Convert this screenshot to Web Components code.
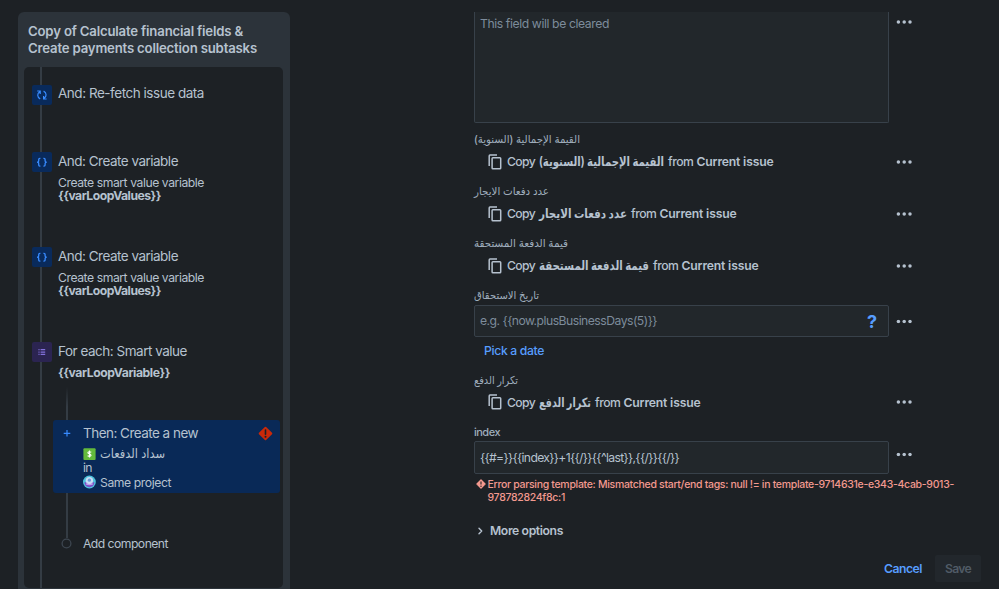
<!DOCTYPE html>
<html lang="en">
<head>
<meta charset="utf-8">
<title>Automation rule</title>
<style>
  :root {
    --surface: #1d2125;
    --raised: #2c333a;
    --input: #22272b;
    --line: #343c44;
    --text: #b6c2cf;
    --subtle: #9fadbc;
    --muted: #7d8c9b;
    --link: #579dff;
    --selected: #092957;
  }
  html, body { height: 100%; }
  body {
    margin: 0;
    overflow: hidden;
    background: var(--surface);
    color: var(--text);
    font-family: Inter, "DejaVu Sans", sans-serif;
    font-size: 12.2px;
  }
</style>
</head>
<body>
<rule-editor>
  <rule-chain slot="chain">
    <span slot="title"><fit-text width="215">Copy of Calculate financial fields &amp;</fit-text><br><fit-text width="229">Create payments collection subtasks</fit-text></span>
    <rule-step icon="refresh" style="height: 67.5px">
      <fit-text slot="title" width="146">And: Re-fetch issue data</fit-text>
    </rule-step>
    <rule-step icon="braces" style="height: 95px">
      <fit-text slot="title" width="120">And: Create variable</fit-text>
      <fit-text width="146">Create smart value variable</fit-text><br>
      <b><fit-text width="103">{{varLoopValues}}</fit-text></b>
    </rule-step>
    <rule-step icon="braces" style="height: 95px">
      <fit-text slot="title" width="120">And: Create variable</fit-text>
      <fit-text width="146">Create smart value variable</fit-text><br>
      <b><fit-text width="103">{{varLoopValues}}</fit-text></b>
    </rule-step>
    <rule-step icon="list" style="height: 45px">
      <fit-text slot="title" width="129">For each: Smart value</fit-text>
      <b><fit-text width="112">{{varLoopVariable}}</fit-text></b>
    </rule-step>
    <branch-steps slot="branch"></branch-steps>
  </rule-chain>

  <form-field top>
    <text-box tall><fit-text width="129">This field will be cleared</fit-text></text-box>
  </form-field>
  <form-field style="margin-top: 7.5px">
    <fit-text slot="label" width="106">القيمة الإجمالية (السنوية)</fit-text>
    <copy-value><b><fit-text width="125">القيمة الإجمالية (السنوية)</fit-text></b></copy-value>
  </form-field>
  <form-field>
    <fit-text slot="label" width="75">عدد دفعات الايجار</fit-text>
    <copy-value><b><fit-text width="88">عدد دفعات الايجار</fit-text></b></copy-value>
  </form-field>
  <form-field>
    <fit-text slot="label" width="94">قيمة الدفعة المستحقة</fit-text>
    <copy-value><b><fit-text width="110">قيمة الدفعة المستحقة</fit-text></b></copy-value>
  </form-field>
  <form-field shift="2.5" style="margin-bottom: 6px">
    <fit-text slot="label" width="65">تاريخ الاستحقاق</fit-text>
    <text-box help style="margin-top: 2.5px"><fit-text width="177">e.g. {{now.plusBusinessDays(5)}}</fit-text></text-box>
    <a slot="below" class="pick"><fit-text width="60">Pick a date</fit-text></a>
  </form-field>
  <form-field>
    <fit-text slot="label" width="44">تكرار الدفع</fit-text>
    <copy-value><b><fit-text width="52">تكرار الدفع</fit-text></b></copy-value>
  </form-field>
  <form-field shift="-1.5">
    <fit-text slot="label" width="26">index</fit-text>
    <text-box filled style="margin-top: 2px"><fit-text width="199">{{#=}}{{index}}+1{{/}}{{^last}},{{/}}{{/}}</fit-text></text-box>
    <error-note slot="below"></error-note>
  </form-field>
  <more-options></more-options>
  <form-actions></form-actions>
</rule-editor>

<script>
const ICONS = {
  refresh: `<svg width="20" height="20" viewBox="0 0 20 20" fill="none" stroke="#388bff" stroke-width="1.2">
    <path d="M5.200 6H8.200V9M7.900 6.400C4.900 8.400 5 12.300 8.200 13.900M14.600 14H11.600V11M11.900 13.600C14.900 11.600 14.800 7.700 11.600 6.100"/></svg>`,
  braces: `<svg width="20" height="20" viewBox="0 0 20 20" fill="none" stroke="#388bff" stroke-width="1.3">
    <path d="M8.4 6.3H7.8Q6.7 6.3 6.7 7.4V9Q6.7 10.2 5 10.2 6.7 10.2 6.7 11.4V13Q6.7 14.1 7.8 14.1H8.4M11.4 6.3H12Q13.1 6.3 13.1 7.4V9Q13.1 10.2 14.8 10.2 13.1 10.2 13.1 11.4V13Q13.1 14.1 12 14.1H11.4"/></svg>`,
  list: `<svg width="20" height="20" viewBox="0 0 20 20" fill="#8270db">
    <path opacity=".75" d="M6.3 7h1.4v1.3H6.3zM6.3 9.4h1.4v1.3H6.3zM6.3 11.8h1.4v1.3H6.3z"/>
    <path d="M8.6 7h4.6v1.3H8.6zM8.6 9.4h4.6v1.3H8.6zM8.6 11.8h4.6v1.3H8.6z"/></svg>`,
  copy: `<svg width="14" height="16" viewBox="0 0 14 16" fill="none" stroke="#b6c2cf" stroke-width="1.5">
    <path d="M1.2 12V1.9Q1.2 1.1 2 1.1H9"/><rect x="4.1" y="3.8" width="8.6" height="10.9" rx=".8"/></svg>`,
  dots: `<svg width="16" height="4" viewBox="0 0 16 4" fill="#b6c2cf">
    <circle cx="2.4" cy="2" r="1.75"/><circle cx="8.2" cy="2" r="1.75"/><circle cx="14" cy="2" r="1.75"/></svg>`,
};

/* Base: renders the static template of the element into its shadow root */
class BaseElement extends HTMLElement {
  constructor() {
    super();
    this.attachShadow({ mode: "open" });
  }
  connectedCallback() {
    this.shadowRoot.innerHTML = `<style>${this.styles()}</style>${this.html()}`;
  }
  styles() { return ":host { display: block; }"; }
  html() { return "<slot></slot>"; }
}

class RuleEditor extends BaseElement {
  styles() {
    return `
      :host { display: grid; grid-template-columns: 290px 525px; column-gap: 184px; height: 100vh; overflow: hidden; }
      aside { padding: 12px 0 0 18px; height: 577px; }
      main { display: flex; flex-direction: column; padding-top: 12px; height: 577px; }
    `;
  }
  html() {
    return `<aside><slot name="chain"></slot></aside><main><slot></slot></main>`;
  }
}

class RuleChain extends BaseElement {
  styles() {
    return `
      :host { display: flex; flex-direction: column; width: 272px; height: 586px; box-sizing: border-box;
        padding: 0 7px 10px 6px; background: var(--raised); border-radius: 6px 6px 0 0; }
      header { height: 55px; padding: 11px 0 0 4px; box-sizing: border-box;
        font-size: 13.2px; font-weight: 600; line-height: 16.8px; white-space: nowrap; }
      .track { height: 521px; box-sizing: border-box; padding: 17px 0 0 8px; border-radius: 5px;
        background: linear-gradient(var(--line), var(--line)) 16px 0 / 2px 100% no-repeat, var(--surface); }
    `;
  }
  html() {
    return `<header><slot name="title"></slot></header>
      <div class="track"><slot></slot><slot name="branch"></slot></div>`;
  }
}

class RuleStep extends BaseElement {
  styles() {
    const bg = this.getAttribute("icon") === "list" ? "#2b2451" : "#092a5b";
    return `
      :host { display: grid; grid-template-columns: 20px 1fr; column-gap: 6px; align-items: start; }
      .icon { width: 20px; height: 20px; margin-top: .5px; border-radius: 2px; background: ${bg}; }
      svg { display: block; }
      .title { font-size: 13.5px; line-height: 18px; height: 24px; }
      .body { line-height: 13.5px; white-space: nowrap; }
    `;
  }
  html() {
    return `<div class="icon">${ICONS[this.getAttribute("icon")]}</div>
      <div><div class="title"><slot name="title"></slot></div><div class="body"><slot></slot></div></div>`;
  }
}

class BranchSteps extends BaseElement {
  styles() {
    return `
      :host { display: block; padding-left: 21px; }
      .stem { width: 2px; margin-left: 13px; background: var(--line); }
      .stem.top { height: 33px; background: linear-gradient(transparent, var(--line) 60%); }
      .stem.bottom { height: 45px; }
      .card { display: grid; grid-template-columns: 30px 1fr 22px; width: 227px; height: 73.5px;
        background: var(--selected); border-radius: 3px; }
      .plus { margin: 9.500px 0 0 9.500px; }
      .title { padding-top: 4px; height: 23px; font-size: 13.5px; line-height: 18px; }
      .line { display: flex; align-items: center; gap: 4px; height: 14px; }
      .line.type { font-size: 12.8px; }
      .line.in { height: 14.6px; }
      .warn { margin-top: 6.5px; }
      .add { display: flex; align-items: center; gap: 11px; height: 10px; padding-left: 8px; }
      svg { display: block; flex: none; }
    `;
  }
  html() {
    return `
      <div class="stem top"></div>
      <div class="card">
        <svg class="plus" width="9" height="9" viewBox="0 0 9 9" stroke="#388bff" stroke-width="1.2"><path d="M4 1v6.6M.7 4.3h6.6"/></svg>
        <div>
          <div class="title"><fit-text width="115">Then: Create a new</fit-text></div>
          <div class="line type">
            <svg width="13" height="12" viewBox="0 0 13 12"><rect x=".4" y=".2" width="12.2" height="11.8" rx="1" fill="#63ba3c"/>
              <path d="M8.3 4.3Q6.5 3.4 5.4 3.9 4.3 4.8 5.6 5.6L7.4 6.3Q8.6 7.3 7.4 8.1 6.2 8.6 4.6 7.8M6.5 2.4v7.2" fill="none" stroke="#fff" stroke-width="1.1"/></svg>
            <fit-text width="65">سداد الدفعات</fit-text>
          </div>
          <div class="line in"><fit-text width="9">in</fit-text></div>
          <div class="line">
            <svg width="13" height="14" viewBox="0 0 13 14"><circle cx="6.4" cy="7" r="6.4" fill="#4fc3dc"/>
              <path d="M1.400 7.200h10q-.4 4.800-5 5Q1.800 12 1.400 7.200z" fill="#7b4fc4"/>
              <circle cx="6.4" cy="5.600" r="3.700" fill="#c9dcf6"/><path d="M3.300 8.200q3.100 1.400 6.200 0l.6 1.300q-3.700 1.300-7.400 0z" fill="#c3a0ee"/>
              <circle cx="6.400" cy="5.200" r="1.600" fill="#6f9fd6"/></svg>
            <fit-text width="71">Same project</fit-text>
          </div>
        </div>
        <svg class="warn" width="15" height="15" viewBox="0 0 15 15"><path d="M7.500 1.600 13.400 7.500 7.500 13.400 1.600 7.500z" fill="#c9290a" stroke="#c9290a" stroke-width="1.800" stroke-linejoin="round"/>
          <path d="M7.500 4v4.200" stroke="#1d2125" stroke-width="1.600" stroke-linecap="round"/><circle cx="7.500" cy="10.800" r="1" fill="#1d2125"/></svg>
      </div>
      <div class="stem bottom"></div>
      <div class="add">
        <svg width="11" height="11" viewBox="0 0 11 11"><circle cx="5.500" cy="5.500" r="4.400" fill="none" stroke="#3d4650" stroke-width="1.300"/></svg>
        <fit-text width="85">Add component</fit-text>
      </div>
    `;
  }
}

class FormField extends BaseElement {
  styles() {
    const shift = this.getAttribute("shift") || 0;
    return `
      :host { display: block; margin-bottom: 5px; }
      .label { height: 15px; padding-top: 1px; line-height: 16px; font-size: 11px; font-weight: 500; color: var(--subtle); white-space: nowrap; }
      .row { display: grid; grid-template-columns: 415px 16px; column-gap: 7px; align-items: center; }
      .menu { transform: translateY(${shift}px); }
      :host([top]) { margin-bottom: 0; }
      :host([top]) .label { display: none; }
      :host([top]) .menu { align-self: start; padding-top: 8px; }
      ::slotted(.pick) { display: block; height: 28px; line-height: 28px; padding-left: 10px;
        font-weight: 500; color: var(--link); }
      svg { display: block; }
    `;
  }
  html() {
    return `<div class="label"><slot name="label"></slot></div>
      <div class="row"><div><slot></slot></div><div class="menu">${ICONS.dots}</div></div>
      <slot name="below"></slot>`;
  }
}

class TextBox extends BaseElement {
  styles() {
    return `
      :host { display: flex; align-items: center; justify-content: space-between; box-sizing: border-box;
        height: 32px; padding: 0 11px 0 5px; background: var(--input); border: 1.500px solid #38414a;
        border-radius: 2px; color: var(--muted); }
      :host([filled]) { height: 33px; color: var(--text); }
      :host([tall]) { height: 110.500px; align-items: flex-start; padding-top: 4px; line-height: 16px;
        border-top: 0; border-radius: 0 0 2px 2px; }
      .help { padding-top: 2px; font-size: 18px; font-weight: 700; color: var(--link); }
    `;
  }
  html() {
    return `<slot></slot>${this.hasAttribute("help") ? `<span class="help">?</span>` : ""}`;
  }
}

/* "Copy <field> from Current issue" */
class CopyValue extends BaseElement {
  styles() {
    return `
      :host { display: flex; align-items: center; height: 31px; padding-left: 14px; font-weight: 500; white-space: nowrap; }
      svg { margin-right: 5px; }
      .from { margin: 0 3px 0 4px; }
      .copy { margin-right: 4px; }
      b { font-weight: 600; }
      ::slotted(b) { font-size: 12.8px; }
    `;
  }
  html() {
    return `${ICONS.copy}<fit-text class="copy" width="28">Copy</fit-text><slot></slot>
      <fit-text class="from" width="25.500">from</fit-text><b><fit-text width="77">Current issue</fit-text></b>`;
  }
}

class ErrorNote extends BaseElement {
  styles() {
    return `
      :host { display: grid; grid-template-columns: 11px 1fr; column-gap: .5px; padding: 4px 0 0 2px;
        font-size: 10.500px; line-height: 13.500px; font-weight: 500; color: #f3998f; white-space: nowrap; }
      svg { display: block; margin-top: 1.500px; }
    `;
  }
  html() {
    return `<svg width="10" height="10" viewBox="0 0 10 10"><path d="M5 1 9 5 5 9 1 5z" fill="#f3998f" stroke="#f3998f" stroke-width="1.400" stroke-linejoin="round"/>
      <path d="M5 2.600v3" stroke="#1d2125" stroke-width="1.100"/><circle cx="5" cy="7.200" r=".7" fill="#1d2125"/></svg>
      <div><fit-text width="466.500">Error parsing template: Mismatched start/end tags: null != in template-9714631e-e343-4cab-9013-</fit-text><br>
      <fit-text width="77.500">978782824f8c:1</fit-text></div>`;
  }
}

class MoreOptions extends BaseElement {
  styles() {
    return `
      :host { display: flex; align-items: center; gap: 6px; height: 16px; margin-top: 13px; padding-left: 3px; font-weight: 600; }
    `;
  }
  html() {
    return `<svg width="7" height="8" viewBox="0 0 7 8" fill="none" stroke="#b6c2cf" stroke-width="1.400" stroke-linecap="round" stroke-linejoin="round"><path d="M2 1.200 4.700 4 2 6.800"/></svg>
      <fit-text width="73">More options</fit-text>`;
  }
}

class FormActions extends BaseElement {
  styles() {
    return `
      :host { display: flex; justify-content: flex-end; align-items: center; gap: 13px; margin-top: auto;
        margin-bottom: 7px; padding-right: 18px; font-weight: 600; }
      .cancel { color: var(--link); }
      .save { width: 46px; height: 27px; line-height: 27px; text-align: center; background: #22272c;
        border-radius: 2px; color: #505b66; }
    `;
  }
  html() {
    return `<span class="cancel"><fit-text width="38">Cancel</fit-text></span>
      <div class="save"><fit-text width="26">Save</fit-text></div>`;
  }
}

/* Runs of text with a set width: tracking for latin, horizontal scale for
   arabic, because tracking would break the joined letters. */
class FitText extends BaseElement {
  styles() {
    return `
      :host { display: inline-block; white-space: nowrap; }
      span { display: inline-block; white-space: nowrap; transform-origin: 0 50%; }
    `;
  }
  html() { return "<span><slot></slot></span>"; }
  connectedCallback() {
    super.connectedCallback();
    const target = Number(this.getAttribute("width"));
    const span = this.shadowRoot.querySelector("span");
    const natural = span.getBoundingClientRect().width;
    if (/[\u0600-\u06ff]/.test(this.textContent)) {
      span.dir = "rtl";
      span.style.transform = `scaleX(${target / natural})`;
    } else {
      span.style.letterSpacing = `${(target - natural) / this.textContent.length}px`;
    }
    this.style.width = `${target}px`;
  }
}

customElements.define("rule-editor", RuleEditor);
customElements.define("rule-chain", RuleChain);
customElements.define("rule-step", RuleStep);
customElements.define("branch-steps", BranchSteps);
customElements.define("form-field", FormField);
customElements.define("text-box", TextBox);
customElements.define("copy-value", CopyValue);
customElements.define("error-note", ErrorNote);
customElements.define("more-options", MoreOptions);
customElements.define("form-actions", FormActions);
// last, so that every font size above is already applied when it measures
customElements.define("fit-text", FitText);
</script>
</body>
</html>
